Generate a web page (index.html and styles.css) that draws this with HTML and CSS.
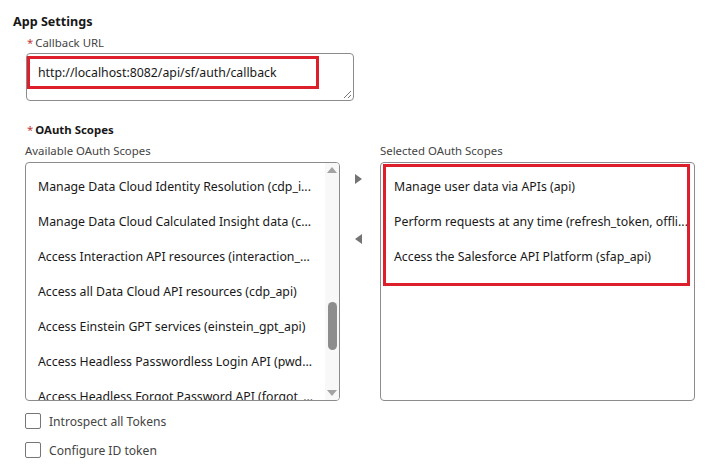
FILE: index.html
```html
<!DOCTYPE html>
<html lang="en">
<head>
    <meta charset="UTF-8">
    <title>App Settings</title>
    <link rel="stylesheet" href="styles.css">
</head>
<body>
    <div class="page">
        <h2 class="section-title">App Settings</h2>

        <div class="field callback">
            <div class="field-label"><abbr class="required">*</abbr>Callback URL</div>
            <div class="textarea">
                <div class="highlight url-box">http://localhost:8082/api/sf/auth/callback</div>
                <!-- resize grip -->
                <svg class="grip" width="9" height="9" viewBox="0 0 9 9">
                    <path d="M1 8 L8 1 M5 8 L8 5" stroke="#777" stroke-width="1" fill="none"/>
                </svg>
            </div>
        </div>

        <div class="field scopes">
            <div class="group-label"><abbr class="required">*</abbr>OAuth Scopes</div>
            <div class="dueling">
                <div class="list-col">
                    <div class="list-label">Available OAuth Scopes</div>
                    <div class="listbox">
                        <ul class="options">
                            <li>Manage Data Cloud Identity Resolution (cdp_i...</li>
                            <li>Manage Data Cloud Calculated Insight data (c...</li>
                            <li>Access Interaction API resources (interaction_...</li>
                            <li>Access all Data Cloud API resources (cdp_api)</li>
                            <li>Access Einstein GPT services (einstein_gpt_api)</li>
                            <li>Access Headless Passwordless Login API (pwd...</li>
                            <li>Access Headless Forgot Password API (forgot_...</li>
                        </ul>
                        <div class="scrollbar">
                            <span class="sb-btn"><span class="tri-up"></span></span>
                            <span class="sb-track"><span class="sb-thumb"></span></span>
                            <span class="sb-btn"><span class="tri-down"></span></span>
                        </div>
                    </div>
                </div>

                <div class="mover">
                    <button class="move-btn" title="Move to Selected"><span class="tri-right"></span></button>
                    <button class="move-btn" title="Move to Available"><span class="tri-left"></span></button>
                </div>

                <div class="list-col">
                    <div class="list-label">Selected OAuth Scopes</div>
                    <div class="listbox">
                        <div class="highlight selected-box">
                            <ul class="options">
                                <li>Manage user data via APIs (api)</li>
                                <li>Perform requests at any time (refresh_token, offli...</li>
                                <li>Access the Salesforce API Platform (sfap_api)</li>
                            </ul>
                        </div>
                    </div>
                </div>
            </div>
        </div>

        <label class="checkbox first">
            <span class="box"></span>
            <span class="check-label">Introspect all Tokens</span>
        </label>
        <label class="checkbox">
            <span class="box"></span>
            <span class="check-label">Configure ID token</span>
        </label>
    </div>
</body>
</html>
```

FILE: styles.css
```css
/* App settings form */
body {
    margin: 0;
    background-color: #fff;
    color: #181818;
    font-family: "Segoe UI", "Noto Sans", sans-serif;
    font-size: 12.3px;
}
.page {
    padding: 12px 0 0 13px;
}
.section-title {
    margin: 0;
    font-size: 12.6px;
    line-height: 20px;
    font-weight: bold;
    color: #181818;
}
.required {
    color: #c23934;
    text-decoration: none;
    margin-right: 2px;
    font-weight: normal;
}
.field-label,
.list-label {
    font-size: 11.4px;
    line-height: 18px;
    color: #444;
}

/* callback url */
.callback {
    margin: 2px 0 0 13px;
}
.callback .field-label {
    padding-left: 1px;
}
.textarea {
    position: relative;
    width: 328px;
    height: 48px;
    margin-top: 1px;
    box-sizing: border-box;
    border: 1px solid #8c8c8c;
    border-radius: 4px;
}
.highlight {
    border: 3px solid #dc1f2b;
}
.url-box {
    width: 292px;
    height: 33px;
    box-sizing: border-box;
    margin: 2px 0 0 0;
    padding-left: 8px;
    line-height: 27px;
}
.grip {
    position: absolute;
    right: 1px;
    bottom: 1px;
}

/* oauth scopes */
.scopes {
    margin: 20px 0 0 12px;
}
.group-label {
    font-size: 11.4px;
    line-height: 18px;
    font-weight: bold;
    margin: 0 0 3px 2px;
}
.dueling {
    display: flex;
}
.list-col {
    width: 315px;
}
.list-label {
    margin-bottom: 2px;
}
.listbox {
    display: flex;
    height: 239px;
    box-sizing: border-box;
    border: 1px solid #8c8c8c;
    border-radius: 4px;
    overflow: hidden;
}
.options {
    flex: 1;
    min-width: 0;
    margin: 0;
    padding: 6px 0 0 12px;
    list-style: none;
    overflow: hidden;
}
.options li {
    height: 35px;
    line-height: 35px;
    white-space: nowrap;
}
.selected-box {
    width: 307px;
    height: 122px;
    box-sizing: border-box;
    margin: 1px 0 0 2px;
}
.selected-box .options {
    padding: 2px 0 0 8px;
}

/* fake scrollbar for the available list */
.scrollbar {
    display: flex;
    flex-direction: column;
    width: 14px;
    background-color: #f8f8f8;
}
.sb-btn {
    display: flex;
    height: 14px;
    align-items: center;
    justify-content: center;
}
.sb-track {
    flex: 1;
    display: flex;
    justify-content: center;
}
.sb-thumb {
    width: 9px;
    height: 48px;
    margin-top: 125px;
    border-radius: 5px;
    background-color: #8d8d8d;
}
.tri-up,
.tri-down {
    width: 0;
    height: 0;
    border-left: 5px solid transparent;
    border-right: 5px solid transparent;
}
.tri-up {
    border-bottom: 6px solid #a3a3a3;
}
.tri-down {
    border-top: 6px solid #a3a3a3;
}

/* move buttons */
.mover {
    width: 40px;
    display: flex;
    flex-direction: column;
    align-items: center;
    padding-top: 32px;
    gap: 50px;
}
.move-btn {
    display: flex;
    width: 12px;
    height: 10px;
    padding: 0;
    margin-right: 4px;
    border: none;
    background: none;
    justify-content: center;
    align-items: center;
}
.tri-right,
.tri-left {
    width: 0;
    height: 0;
    border-top: 5px solid transparent;
    border-bottom: 5px solid transparent;
}
.tri-right {
    border-left: 7px solid #747474;
}
.tri-left {
    border-right: 7px solid #747474;
}

/* checkboxes */
.checkbox {
    display: flex;
    align-items: center;
    margin: 13px 0 0 12px;
    height: 16px;
    color: #444;
    font-size: 12.1px;
}
.checkbox.first {
    margin-top: 12px;
}
.box {
    width: 16px;
    height: 16px;
    box-sizing: border-box;
    border: 1px solid #767676;
    border-radius: 2px;
    margin-right: 8px;
}
```
